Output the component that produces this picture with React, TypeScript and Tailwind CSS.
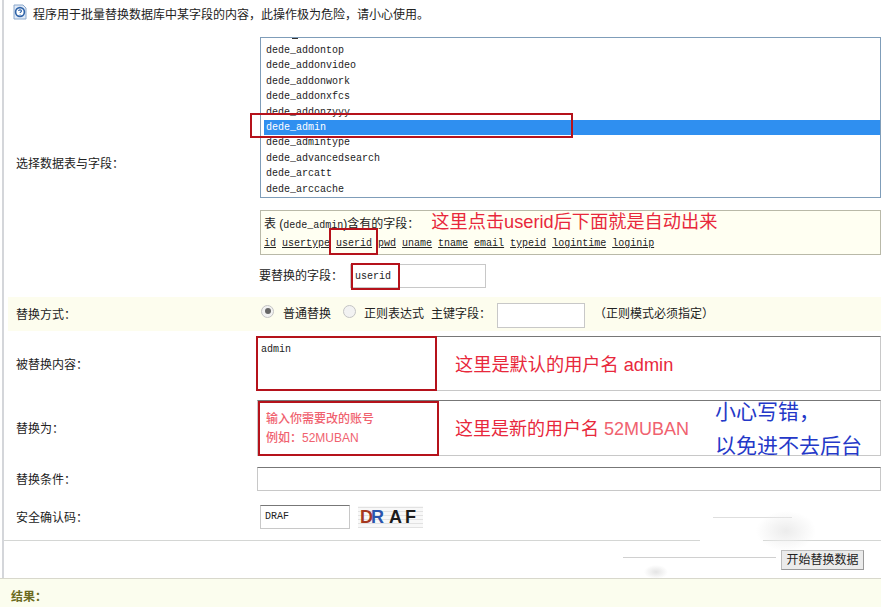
const CJK = "font-['Liberation_Sans','Noto_Sans_CJK_SC',sans-serif]";
const MONO = "font-['Liberation_Mono','Noto_Sans_CJK_SC',monospace]";

const TABLES = [
  "dede_addontop",
  "dede_addonvideo",
  "dede_addonwork",
  "dede_addonxfcs",
  "dede_addonzyyy",
  "dede_admin",
  "dede_admintype",
  "dede_advancedsearch",
  "dede_arcatt",
  "dede_arccache",
];

const FIELDS = ["id", "usertype", "userid", "pwd", "uname", "tname", "email", "typeid", "logintime", "loginip"];

function Label({ children }: { children: React.ReactNode }) {
  return <div className="w-[253px] shrink-0 pl-[12px] pt-[2px] text-[12px] leading-none text-[#222]">{children}</div>;
}

function Radio({ on }: { on?: boolean }) {
  return (
    <span className="grid h-[13px] w-[13px] place-items-center rounded-full border border-[#c4c4c4] bg-[#f2f2f2]">
      {on && <span className="h-[6px] w-[6px] rounded-full bg-[#666]" />}
    </span>
  );
}

export default function App() {
  return (
    <div className={`relative h-[607px] w-[881px] overflow-hidden bg-white ${CJK}`}>
      <div className="ml-[2px] h-[578px] border-l-2 border-[#d4d6da]">
        {/* notice */}
        <div className="flex h-[37px] items-start pl-[9px] pt-[4px]">
          <svg width="14" height="16" viewBox="0 0 14 16" className="shrink-0">
            <path d="M1 1h9l3 3v11H1z" fill="#dfe9f6" stroke="#8ba8cc" />
            <circle cx="7" cy="8" r="4.4" fill="#fff" stroke="#2f63a8" strokeWidth="1.6" />
            <path d="M5.5 7c.3-1.6 3-1.4 3 0 0 1-1.4 1-1.4 2M7.1 10.4v.6" fill="none" stroke="#2f63a8" strokeWidth="1.1" />
          </svg>
          <span className="ml-[6px] mt-[5px] text-[12px] leading-none text-[#222]">
            程序用于批量替换数据库中某字段的内容，此操作极为危险，请小心使用。
          </span>
        </div>

        {/* table picker, field list and target field share one label */}
        <div className="flex h-[260px]">
          <div className="flex h-[252px] items-center">
            <Label>选择数据表与字段：</Label>
          </div>
          <div className="flex flex-1 flex-col pl-[3px]">
            <div className={`relative h-[161px] shrink-0 overflow-hidden border border-[#7f9db9] pl-[5px] pt-[5px] ${MONO} text-[10px] text-[#222]`}>
              <span className="absolute left-[31px] top-0 h-px w-[6px] bg-[#333]" />
              {TABLES.map((name) => (
                <div
                  key={name}
                  className={`-ml-[2px] h-[15.4px] pl-[2px] leading-[15px] ${name === "dede_admin" ? "bg-[#2f8ff0] text-white" : ""}`}
                >
                  {name}
                </div>
              ))}
            </div>

            <div className="mt-[12px] h-[45px] shrink-0 border border-[#b9b9a8] bg-[#fffff2] pl-[3px] pt-[3px] text-[12px] text-[#222]">
              <div className="flex h-[19px] items-center">
                <span>
                  表 (<span className={`${MONO} text-[10px]`}>dede_admin</span>)含有的字段：
                </span>
                <span className="-mt-[3px] ml-[12px] text-[18.2px] leading-none text-[#e8283c]">这里点击userid后下面就是自动出来</span>
              </div>
              <div className={`mt-[2px] flex gap-[6px] ${MONO} text-[10px] leading-[17px] text-[#222] underline`}>
                {FIELDS.map((f) => (
                  <span key={f}>{f}</span>
                ))}
              </div>
            </div>

            <div className="flex h-[42px] shrink-0 items-start pt-[9px]">
              <span className="-ml-[1px] mt-[6px] w-[91px] text-[12px] leading-none text-[#222]">要替换的字段：</span>
              <div className={`h-[24px] w-[136px] border border-[#c8c8c8] pl-[4px] ${MONO} text-[10px] leading-[24px] text-[#222]`}>userid</div>
            </div>
          </div>
        </div>

        {/* mode */}
        <div className="ml-[4px] flex h-[34px] items-center bg-[#fdfdee]">
          <div className="w-[245px] shrink-0 pl-[8px] pt-[2px] text-[12px] leading-none text-[#222]">替换方式：</div>
          <div className="ml-[8px] flex items-center text-[12px] leading-none text-[#222]">
            <span className="-mt-[6px]"><Radio on /></span>
            <span className="ml-[9px]">普通替换</span>
            <span className="-mt-[6px] ml-[12px]"><Radio /></span>
            <span className="ml-[8px]">正则表达式</span>
            <span className="ml-[7px]">主键字段：</span>
            <div className="ml-[6px] mt-[2px] h-[25px] w-[88px] border border-[#c8c8c8] bg-white" />
            <span className="ml-[9px]">（正则模式必须指定）</span>
          </div>
        </div>

        {/* find */}
        <div className="mt-[5px] flex h-[55px]">
          <div className="flex items-center">
            <Label>被替换内容：</Label>
          </div>
          <div className="relative flex-1 border border-[#c8c8c8] border-t-[#777]">
            <span className={`absolute left-[3px] top-[8px] ${MONO} text-[10px] leading-none text-[#222]`}>admin</span>
            <span className="absolute left-[197px] top-[19px] text-[18.2px] leading-none text-[#e8283c]">这里是默认的用户名 admin</span>
          </div>
        </div>

        {/* replace */}
        <div className="mt-[9px] flex h-[56px]">
          <div className="flex items-center">
            <Label>替换为：</Label>
          </div>
          <div className="relative flex-1 border border-[#c8c8c8] border-t-[#777]">
            <div className="absolute left-[8px] top-[9px] text-[12px] font-medium leading-[19px] text-[#f0626f]">
              输入你需要改的账号
              <br />
              例如：52MUBAN
            </div>
            <span className="absolute left-[197px] top-[19px] text-[18px] leading-none text-[#e8283c]">
              这里是新的用户名 <span className="font-medium text-[#f0626f]">52MUBAN</span>
            </span>
            <span className="absolute left-[457px] -top-[6px] text-[21px] leading-[34px] text-[#2438c8]">
              小心写错，
              <br />
              以免进不去后台
            </span>
          </div>
        </div>

        {/* condition */}
        <div className="mt-[11px] flex h-[24px] items-center">
          <Label>替换条件：</Label>
          <div className="h-[24px] flex-1 border border-[#c8c8c8] border-t-[#777]" />
        </div>

        {/* captcha */}
        <div className="mt-[14px] flex h-[24px] items-center">
          <Label>安全确认码：</Label>
          <div className={`ml-[3px] h-[24px] w-[90px] border border-[#c8c8c8] border-t-[#777] pl-[4px] ${MONO} text-[10px] leading-[22px] text-[#222]`}>DRAF</div>
          <div className="ml-[8px] flex h-[22px] w-[65px] items-center bg-[#f8f8f8] bg-[repeating-linear-gradient(0deg,#e2e2e2_0,#e2e2e2_1px,transparent_1px,transparent_4px)] pl-[2px] font-['Liberation_Sans',sans-serif] text-[18px] font-bold leading-none tracking-[-2px]">
            <span className="text-[#a5381f]">D</span>
            <span className="text-[#2a55ad]">R</span>
            <span className="ml-[7px] text-[#1c1c1c]">A</span>
            <span className="ml-[5px] text-[#1c1c1c]">F</span>
          </div>
        </div>

        {/* submit */}
        <div className="relative mt-[11px] h-[38px] border-t border-[#d4d6d4]">
          <div className="absolute right-[17px] top-[9px] h-[20px] w-[83px] border border-[#bdbdbd] border-b-[#999] border-r-[#999] bg-[#ebebeb] text-center text-[12px] leading-[18px] text-[#222]">
            开始替换数据
          </div>
          <div className="absolute left-[619px] top-[16px] h-px w-[153px] bg-[#d0d0d0]" />
          <div className="absolute left-[709px] -top-[24px] h-px w-[79px] bg-[#dedede]" />
          <div className="absolute -top-px left-[696px] h-[2px] w-[63px] bg-white" />
          <div className="absolute -top-[30px] left-[752px] h-[40px] w-[60px] bg-[radial-gradient(closest-side,#ececec,transparent)]" />
          <div className="absolute left-[640px] top-[24px] h-[14px] w-[24px] bg-[radial-gradient(closest-side,#e4e4e4,transparent)]" />
        </div>
      </div>

      {/* result */}
      <div className="h-[29px] border-t border-[#d8d8cc] bg-[#fbfdee] pl-[11px] pt-[12px] text-[12px] font-bold leading-none text-[#6b6b1f]">结果：</div>

      {/* red marks over the form */}
      <div className="absolute left-[250px] top-[113px] h-[25px] w-[323px] border-2 border-[#b5121b]" />
      <div className="absolute left-[329px] top-[228px] h-[27px] w-[49px] border-2 border-[#b5121b]" />
      <div className="absolute left-[351px] top-[263px] h-[27px] w-[49px] border-2 border-[#b5121b]" />
      <div className="absolute left-[256px] top-[336px] h-[55px] w-[181px] border-2 border-[#b5121b]" />
      <div className="absolute left-[258px] top-[401px] h-[55px] w-[181px] border-2 border-[#b5121b]" />
    </div>
  );
}
